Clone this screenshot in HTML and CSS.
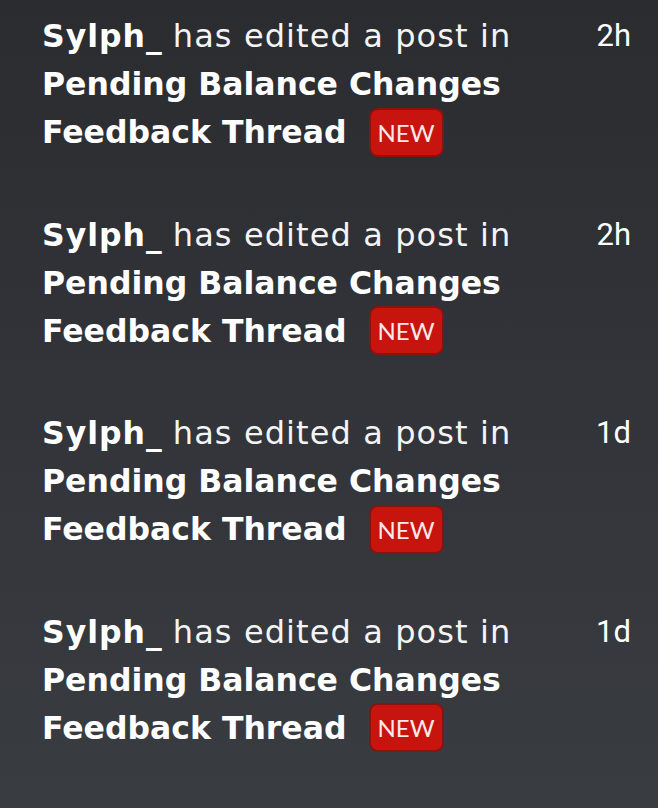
FILE: index.html
```html
<!DOCTYPE html>
<html>
<head>
<meta charset="utf-8">
<link rel="stylesheet" href="styles.css">
</head>
<body>
<ul class="feed">
  <li class="item">
    <div class="text"><span class="user">Sylph_</span> <span class="action">has edited a post in</span><br><span class="thread">Pending Balance Changes<br>Feedback Thread</span><span class="badge">NEW</span></div>
    <div class="time">2h</div>
  </li>
  <li class="item">
    <div class="text"><span class="user">Sylph_</span> <span class="action">has edited a post in</span><br><span class="thread">Pending Balance Changes<br>Feedback Thread</span><span class="badge">NEW</span></div>
    <div class="time">2h</div>
  </li>
  <li class="item">
    <div class="text"><span class="user">Sylph_</span> <span class="action">has edited a post in</span><br><span class="thread">Pending Balance Changes<br>Feedback Thread</span><span class="badge">NEW</span></div>
    <div class="time">1d</div>
  </li>
  <li class="item">
    <div class="text"><span class="user">Sylph_</span> <span class="action">has edited a post in</span><br><span class="thread">Pending Balance Changes<br>Feedback Thread</span><span class="badge">NEW</span></div>
    <div class="time">1d</div>
  </li>
</ul>
</body>
</html>
```
FILE: styles.css
```css
html, body {
  margin: 0;
  padding: 0;
  height: 100%;
}
body {
  background: linear-gradient(180deg, #2a2c30 0%, #393c41 100%);
  color: #ffffff;
  font-family: "DejaVu Sans", "Open Sans", sans-serif;
}
.feed {
  list-style: none;
  margin: 0;
  padding: 0;
}
.item {
  display: flex;
  justify-content: space-between;
  align-items: flex-start;
  height: 198.5px;
  box-sizing: border-box;
  padding: 12px 26px 0 42px;
}
.text {
  font-size: 31.5px;
  line-height: 48px;
}
.user, .thread {
  font-weight: 700;
}
.user {
  letter-spacing: 1px;
}
.action {
  font-weight: 400;
  font-size: 32px;
  letter-spacing: 1.1px;
  color: #f4f4f5;
}
.badge {
  display: inline-block;
  vertical-align: middle;
  margin-left: 22px;
  margin-top: -4px;
  height: 49px;
  box-sizing: border-box;
  padding: 0 7px;
  border: 2px solid #8a1210;
  border-radius: 9px;
  background: #c8140e;
  font-family: Lato, "Liberation Sans", sans-serif;
  font-size: 24px;
  font-weight: 400;
  line-height: 45px;
  letter-spacing: 0;
  color: #fbe9e8;
}
.time {
  font-family: Roboto, "Liberation Sans", sans-serif;
  font-size: 31px;
  line-height: 48px;
  margin-right: 1px;
}
```
